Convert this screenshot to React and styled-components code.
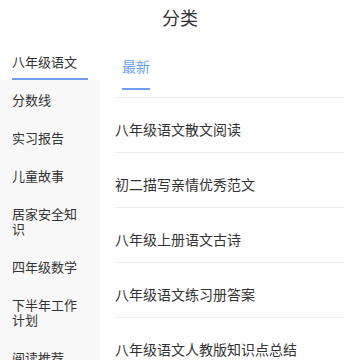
import styled, { createGlobalStyle } from 'styled-components';

const GlobalStyle = createGlobalStyle`
  html, body {
    margin: 0;
    padding: 0;
    background: #ffffff;
  }
  body {
    font-family: "Noto Sans CJK SC", "Noto Sans", sans-serif;
    color: #333333;
  }
`;

const Page = styled.div`
  width: 360px;
  height: 360px;
  overflow: hidden;
  display: flex;
  flex-direction: column;
`;

const Header = styled.header`
  height: 34px;
  flex-shrink: 0;
  display: flex;
  place-items: center;
  justify-content: center;
`;

const Title = styled.h1`
  margin: 0;
  font-size: 18px;
  font-weight: 400;
  line-height: 24px;
  color: #333333;
`;

const Body = styled.div`
  flex: 1;
  display: flex;
  min-height: 0;
`;

const Sidebar = styled.nav`
  width: 100px;
  flex-shrink: 0;
  background-color: #f8f8f8;
  display: flex;
  flex-direction: column;
`;

const SideItem = styled.div`
  padding: ${p => (p.$active ? '20px 12px 0' : '11.5px 12px')};
  background-color: ${p => (p.$active ? '#ffffff' : 'transparent')};
  font-size: 13px;
  line-height: 15px;
  color: #333333;
  word-break: break-all;

  ${p => p.$active && `
    &::after {
      content: '';
      display: block;
      height: 2px;
      margin-top: 9px;
      background-color: #6a9fee;
    }
  `}
`;

const Content = styled.main`
  flex: 1;
  padding: 0 15px;
  display: flex;
  flex-direction: column;
`;

const TabBar = styled.div`
  display: flex;
  padding: 22px 7px 7px;
  border-bottom: 1px solid #eeeeee;
`;

const Tab = styled.div`
  display: inline-block;
  font-size: 14px;
  line-height: 20px;
  color: ${p => (p.$active ? '#6a9fee' : '#333333')};

  &::after {
    content: '';
    display: block;
    height: 2px;
    margin-top: 12px;
    background-color: ${p => (p.$active ? '#6a9fee' : 'transparent')};
  }
`;

const List = styled.ul`
  list-style: none;
  margin: 0;
  padding: 0;
`;

const Row = styled.li`
  padding: 22px 0 14px;
  font-size: 14px;
  line-height: 18px;
  color: #333333;
  border-bottom: 1px solid #eeeeee;
`;

const categories = [
  '八年级语文',
  '分数线',
  '实习报告',
  '儿童故事',
  '居家安全知识',
  '四年级数学',
  '下半年工作计划',
  '阅读推荐',
];

const articles = [
  '八年级语文散文阅读',
  '初二描写亲情优秀范文',
  '八年级上册语文古诗',
  '八年级语文练习册答案',
  '八年级语文人教版知识点总结',
];

export default function App() {
  return (
    <>
      <GlobalStyle />
      <Page>
        <Header>
          <Title>分类</Title>
        </Header>
        <Body>
          <Sidebar>
            {categories.map((name, i) => (
              <SideItem key={name} $active={i === 0}>{name}</SideItem>
            ))}
          </Sidebar>
          <Content>
            <TabBar>
              <Tab $active>最新</Tab>
            </TabBar>
            <List>
              {articles.map(title => (
                <Row key={title}>{title}</Row>
              ))}
            </List>
          </Content>
        </Body>
      </Page>
    </>
  );
}
